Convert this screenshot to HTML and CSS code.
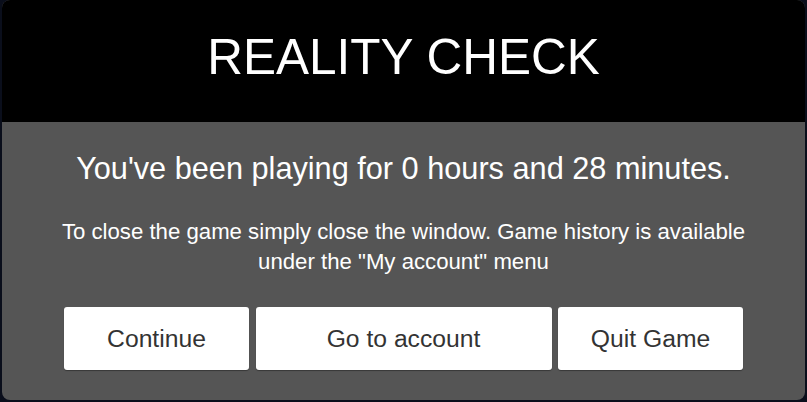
FILE: index.html
```html
<!DOCTYPE html>
<html lang="en">
<head>
<meta charset="utf-8">
<title>Reality Check</title>
<link rel="stylesheet" href="styles.css">
</head>
<body>
<div class="dialog">
  <header class="dialog-header">
    <h1 class="dialog-title">REALITY CHECK</h1>
  </header>
  <section class="dialog-body">
    <p class="playtime">You've been playing for 0 hours and 28 minutes.</p>
    <p class="note">To close the game simply close the window. Game history is available under the "My account" menu</p>
    <div class="actions">
      <button class="btn">Continue</button>
      <button class="btn">Go to account</button>
      <button class="btn">Quit Game</button>
    </div>
  </section>
</div>
</body>
</html>
```
FILE: styles.css
```css
html, body {
  margin: 0;
  padding: 0;
  background: #0a0e1b;
  font-family: "Liberation Sans", Arial, sans-serif;
}
.dialog {
  margin: 0 2px;
  height: 400px;
  border-radius: 8px;
  overflow: hidden;
  background: #555555;
  display: flex;
  flex-direction: column;
}
.dialog-header {
  background: #000000;
  height: 122px;
  display: flex;
  justify-content: center;
  align-items: flex-start;
}
.dialog-title {
  margin: 0;
  padding-top: 29px;
  color: #ffffff;
  font-weight: normal;
  font-size: 49.5px;
  line-height: 56px;
}
.dialog-body {
  flex: 1;
  display: flex;
  flex-direction: column;
  align-items: center;
  padding: 30px 0 30px;
  box-sizing: border-box;
}
.playtime {
  margin: 0;
  color: #ffffff;
  font-size: 30.7px;
  line-height: 34px;
  text-align: center;
}
.note {
  margin: 31px 0 0;
  width: 700px;
  color: #ffffff;
  font-size: 22.2px;
  line-height: 30px;
  text-align: center;
}
.actions {
  margin-top: 30px;
  display: grid;
  grid-template-columns: 185px 296px 185px;
  column-gap: 6.5px;
  justify-content: center;
}
.btn {
  height: 63px;
  border: none;
  border-radius: 3px;
  background: #ffffff;
  color: #333333;
  font-family: "Liberation Sans", Arial, sans-serif;
  font-size: 24.7px;
  box-shadow: 0 1px 1px rgba(0, 0, 0, 0.35);
  padding: 0;
  cursor: pointer;
}
```
